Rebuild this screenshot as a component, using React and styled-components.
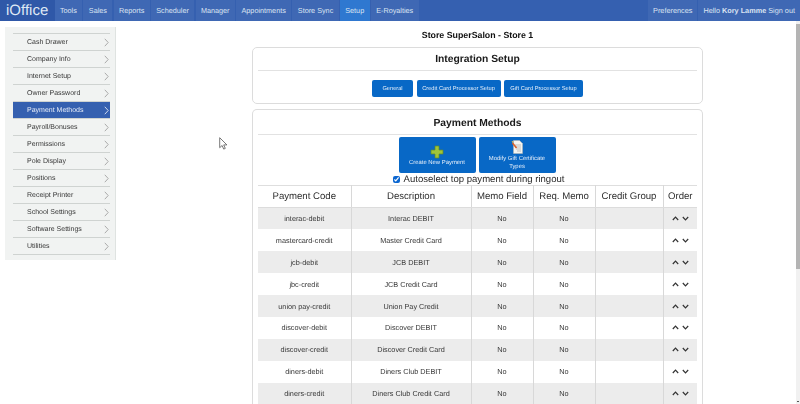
import React from "react";
import styled, { createGlobalStyle } from "styled-components";

const Global = createGlobalStyle`
  html, body { margin: 0; padding: 0; height: 404px; overflow: hidden; background: #fff; }
  body { font-family: "Liberation Sans", Arial, sans-serif; color: #222; text-rendering: geometricPrecision; }
  #root { height: 404px; }
`;

const Page = styled.div`
  width: 800px; height: 404px; display: flex; flex-direction: column; overflow: hidden; position: relative;
`;
const TopBar = styled.header`
  height: 21px; flex: none; background: #3560b0; display: flex; align-items: stretch;
`;
const Logo = styled.div`
  width: 54.5px; flex: none; font-size: 15px; color: #dfe8f5; display: flex; align-items: center; padding-left: 6px; box-sizing: border-box; background: #2f58a8;
`;
const NavItem = styled.a`
  display: flex; align-items: center; height: 21px; padding: 0 5.4px; margin-right: 1.2px; font-size: 7.25px; color: #dbe4f2;
  background: ${p => (p.$active ? "#2f78d0" : "#3f68b4")};
`;
const Spacer = styled.div`flex: 1;`;
const UserText = styled.div`
  display: flex; align-items: center; padding: 0 5px; font-size: 7.3px; color: #dbe4f2; background: #3f68b4; margin-left: 1px;
  b { margin: 0 2px; }
`;
const Body = styled.div`
  flex: 1; display: flex; min-height: 0;
`;
const SidebarFrame = styled.div`
  width: 111px; height: 233px; margin: 6px 0 0 5px; flex: none; background: #f1f3f2; border-right: 1px solid #dfe3e1; box-sizing: border-box;
`;
const Sidebar = styled.nav`
  padding: 7px 5px 0 8px; will-change: transform;
`;
const SideItem = styled.a`
  display: flex; justify-content: space-between; align-items: center; height: 16px; margin-bottom: 1px; padding: 0 1px 0 14px;
  font-size: 7px; color: ${p => (p.$active ? "#e6ecf8" : "#383838")};
  background: ${p => (p.$active ? "#3560b0" : "transparent")};
  box-shadow: 0 -1px 0 #cfd3d1;
  &:last-child { box-shadow: 0 -1px 0 #cfd3d1, 0 1px 0 #cfd3d1; }
`;
const Main = styled.main`
  flex: none; width: 451px; margin-left: 136px; display: flex; flex-direction: column; will-change: transform;
  & > * { flex: none; }
`;
const StoreTitle = styled.h1`
  margin: 0; height: 26px; display: flex; align-items: center; justify-content: center; font-size: 8.8px; font-weight: bold; color: #111; box-sizing: border-box; padding-top: 1px;
`;
const Panel = styled.section`
  border: 1px solid #dcdcdc; border-radius: 5px; padding: 0 5px; margin-bottom: 5px;
  &:last-child { margin-bottom: 0; border-bottom: 0; border-bottom-left-radius: 0; border-bottom-right-radius: 0; }
`;
const PanelTitle = styled.h2`
  margin: 0; height: ${p => p.$h}px; box-sizing: border-box; padding-top: ${p => p.$h - 22}px; display: flex; align-items: center; justify-content: center; font-size: 10.3px; font-weight: bold; color: #1a1a1a; border-bottom: 1px solid #e2e2e2;
`;
const ButtonRow = styled.div`
  display: flex; justify-content: center; gap: 3.5px; padding: 9px 0 6px;
`;
const SmallButton = styled.button`
  height: 17px; padding: 0 3px; border: 0; border-radius: 2px; background: #0868c6; color: #e6effa; font: 5.7px "Liberation Sans", Arial, sans-serif;
  text-rendering: geometricPrecision; width: ${p => p.$w}px; white-space: nowrap;
`;
const ActionRow = styled.div`
  display: flex; justify-content: center; gap: 3px; padding-top: 2px; margin-right: 1px;
`;
const BigButton = styled.button`
  width: 77px; height: 36px; border: 0; border-radius: 2px; background: #0868c6; color: #e6effa; font: 5.9px/7.5px "Liberation Sans", Arial, sans-serif;
  text-rendering: geometricPrecision;
  display: flex; flex-direction: column; align-items: center; justify-content: flex-start; padding: ${p => p.$top}px 4px 0;
  svg { flex: none; margin-bottom: ${p => p.$gap}px; }
`;
const Autoselect = styled.label`
  display: flex; align-items: center; justify-content: center; font-size: 9.55px; color: #2a2a2a; height: 12px; padding-left: 2px;
  input { width: 7px; height: 7px; margin: 0 4px 0 0; accent-color: #0b66d0; }
`;
const Table = styled.table`
  width: 439px; border-collapse: collapse; table-layout: fixed; font-size: 7.3px; color: #383838;
  border-top: 1px solid #dedede;
`;
const Th = styled.th`
  height: 21px; padding: 0; font-weight: normal; font-size: 9.6px; color: #2e2e2e; border-left: 1px solid #d8d8d8; border-bottom: 1px solid #dcdcdc;
  &:first-child { border-left: 0; }
`;
const Row = styled.tr`
  background: ${p => (p.$odd ? "#ececec" : "#fff")};
`;
const Td = styled.td`
  height: 21.9px; padding: 0; text-align: center; border-left: 1px solid #d8d8d8; box-sizing: border-box;
  &:first-child { border-left: 0; }
`;
const OrderIcons = styled.span`
  display: inline-flex; gap: 3px; align-items: center; svg { display: block; }
`;
const Scrollbar = styled.div`
  position: absolute; right: 0; top: 21px; bottom: 0; width: 4px; background: #f1f1f1; display: flex; flex-direction: column;
`;
const Thumb = styled.div`
  height: 245px; margin-top: 3px; background: #b4b4b4;
`;
const ScrollArrow = styled.div`
  width: 2px; height: 1px; margin: auto 1px 2px; background: #555;
`;
const Cursor = styled.svg`
  position: absolute; left: 219px; top: 137px;
`;

const nav = ["Tools","Sales","Reports","Scheduler","Manager","Appointments","Store Sync","Setup","E-Royalties"];
const side = ["Cash Drawer","Company Info","Internet Setup","Owner Password","Payment Methods","Payroll/Bonuses","Permissions","Pole Display","Positions","Receipt Printer","School Settings","Software Settings","Utilities"];
const rows = [
  ["interac-debit","Interac DEBIT"],["mastercard-credit","Master Credit Card"],["jcb-debit","JCB DEBIT"],["jbc-credit","JCB Credit Card"],
  ["union pay-credit","Union Pay Credit"],["discover-debit","Discover DEBIT"],["discover-credit","Discover Credit Card"],["diners-debit","Diners Club DEBIT"],["diners-credit","Diners Club Credit Card"],
];

const Chevron = ({ color = "#aaa" }) => (
  <svg width="5" height="9" viewBox="0 0 5 9"><path d="M.8.8 4.2 4.5.8 8.2" fill="none" stroke={color} strokeWidth="1"/></svg>
);
const Up = () => <svg width="7" height="5" viewBox="0 0 7 5"><path d="M.8 4 3.5 1.2 6.2 4" fill="none" stroke="#333" strokeWidth="1.2"/></svg>;
const Down = () => <svg width="7" height="5" viewBox="0 0 7 5"><path d="M.8 1 3.5 3.8 6.2 1" fill="none" stroke="#333" strokeWidth="1.2"/></svg>;
const Plus = () => (
  <svg width="14" height="14" viewBox="0 0 14 14">
    <path d="M5 1h4v4h4v4H9v4H5V9H1V5h4z" fill="#9fc43a" stroke="#5f8a25" strokeWidth=".7"/>
  </svg>
);
const Doc = () => (
  <svg width="13" height="14" viewBox="0 0 13 14">
    <path d="M2.5.5h6l3 3v10h-9z" fill="#f4f4f0" stroke="#b8b8b0" strokeWidth=".5"/>
    <path d="M4 5h6M4 7h6M5 9h5M6 11h4" stroke="#9a9a9a" strokeWidth=".6"/>
    <path d="M1.5 3 5.5 8" stroke="#d9622b" strokeWidth="1.6"/>
    <path d="M1 2.2 2.2 1.6" stroke="#e9c24a" strokeWidth="1.4"/>
  </svg>
);

export default function App() {
  return (
    <Page>
      <Global />
      <TopBar>
        <Logo>iOffice</Logo>
        {nav.map(n => <NavItem key={n} $active={n === "Setup"}>{n}</NavItem>)}
        <Spacer />
        <UserText>Preferences</UserText>
        <UserText>Hello <b>Kory Lamme</b> Sign out</UserText>
      </TopBar>
      <Body>
        <SidebarFrame>
          <Sidebar>
            {side.map(s => (
              <SideItem key={s} $active={s === "Payment Methods"}>
                {s}<Chevron color={s === "Payment Methods" ? "#cfd9ee" : "#aaa"} />
              </SideItem>
            ))}
          </Sidebar>
        </SidebarFrame>
        <Main>
          <StoreTitle>Store SuperSalon - Store 1</StoreTitle>
          <Panel>
            <PanelTitle $h={23}>Integration Setup</PanelTitle>
            <ButtonRow>
              <SmallButton $w={41}>General</SmallButton>
              <SmallButton $w={84}>Credit Card Processor Setup</SmallButton>
              <SmallButton $w={79}>Gift Card Processor Setup</SmallButton>
            </ButtonRow>
          </Panel>
          <Panel>
            <PanelTitle $h={25}>Payment Methods</PanelTitle>
            <ActionRow>
              <BigButton $top={8} $gap={1}><Plus />Create New Payment</BigButton>
              <BigButton $top={3} $gap={2}><Doc />Modify Gift Certificate Types</BigButton>
            </ActionRow>
            <Autoselect><input type="checkbox" defaultChecked readOnly />Autoselect top payment during ringout</Autoselect>
            <Table>
              <colgroup>
                <col style={{ width: 93 }} /><col style={{ width: 120 }} /><col style={{ width: 62 }} /><col style={{ width: 62 }} /><col style={{ width: 68 }} /><col />
              </colgroup>
              <thead>
                <tr><Th>Payment Code</Th><Th>Description</Th><Th>Memo Field</Th><Th>Req. Memo</Th><Th>Credit Group</Th><Th>Order</Th></tr>
              </thead>
              <tbody>
                {rows.map((r, i) => (
                  <Row key={r[0]} $odd={i % 2 === 0}>
                    <Td>{r[0]}</Td><Td>{r[1]}</Td><Td>No</Td><Td>No</Td><Td></Td>
                    <Td><OrderIcons><Up /><Down /></OrderIcons></Td>
                  </Row>
                ))}
              </tbody>
            </Table>
          </Panel>
        </Main>
      </Body>
      <Scrollbar><Thumb /><ScrollArrow /></Scrollbar>
      <Cursor width="9" height="13" viewBox="0 0 9 13"><path d="M.7.7v10l2.4-2.2 1.6 3.6 1.6-.7-1.6-3.5h3.2z" fill="#fff" stroke="#555" strokeWidth=".8"/></Cursor>
    </Page>
  );
}
